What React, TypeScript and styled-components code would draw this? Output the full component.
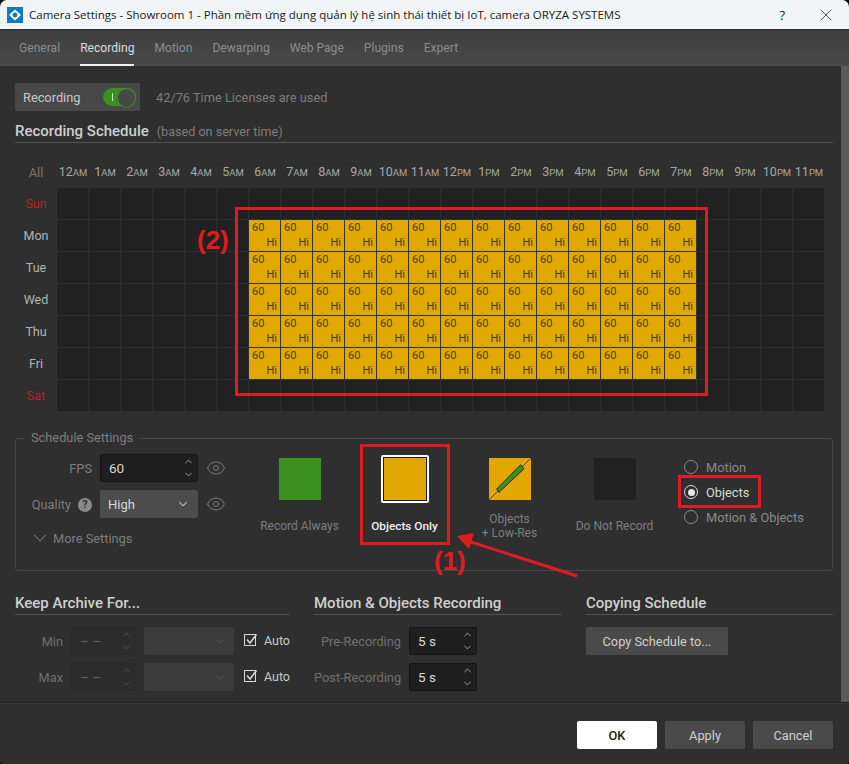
import React from "react";
import styled, { createGlobalStyle } from "styled-components";
import { ChevronDown, ChevronUp, Eye, X } from "lucide-react";

const GlobalStyle = createGlobalStyle`
    html, body {
        margin: 0;
        padding: 0;
        background: #0b0b0b;
    }
    * {
        box-sizing: border-box;
    }
`;

const Window = styled.div`
    position: relative;
    width: 849px;
    height: 764px;
    display: flex;
    flex-direction: column;
    background: #2f2f2f;
    border-radius: 7px 7px 4px 4px;
    overflow: hidden;
    font-family: Roboto, "Liberation Sans", sans-serif;
    font-size: 12.8px;
    color: #cfcfcf;
`;

const TitleBar = styled.div`
    height: 30px;
    flex-shrink: 0;
    display: flex;
    align-items: center;
    padding: 0 13px 0 7px;
    background: #f2f5f8;
    border-bottom: 1px solid #2a2a2a;
    color: #1a1a1a;
`;

const TitleText = styled.span`
    margin-left: 6px;
    flex: 1;
    font-family: "Open Sans", "Noto Sans", sans-serif;
    font-size: 11.5px;
    white-space: nowrap;
`;

const HelpMark = styled.span`
    font-family: "Open Sans", sans-serif;
    font-size: 13px;
    margin-right: 31px;
`;

const TabBar = styled.div`
    height: 36px;
    flex-shrink: 0;
    display: flex;
    gap: 20px;
    padding-left: 19px;
    background: linear-gradient(#3e3e3e, #4a4a4a);
    font-size: 12.1px;
`;

const Tab = styled.div<{ $active?: boolean }>`
    display: flex;
    align-items: center;
    height: 100%;
    padding-top: 2px;
    color: ${props => props.$active ? "#dcdcdc" : "#8c8c8c"};
    border-bottom: 2px solid ${props => props.$active ? "#f0f0f0" : "transparent"};
`;

const Body = styled.div`
    flex: 1;
    min-height: 0;
    display: flex;
`;

const Content = styled.div`
    flex: 1;
    padding: 17px 8px 0 15px;
`;

const ScrollTrack = styled.div`
    width: 8px;
    background: #5a5a5a;
`;

const RecordingRow = styled.div`
    display: flex;
    align-items: center;
    height: 28px;
    gap: 16px;
`;

const RecordingChip = styled.div`
    width: 125px;
    height: 28px;
    display: flex;
    align-items: center;
    justify-content: space-between;
    padding: 0 4px 0 8px;
    background: #484848;
    border-radius: 2px;
    color: #c8c8c8;
`;

const Toggle = styled.div`
    position: relative;
    width: 33px;
    height: 18px;
    border-radius: 9px;
    background: #3a8f1e;

    &::before {
        content: "";
        position: absolute;
        left: 9px;
        top: 5px;
        width: 1px;
        height: 8px;
        background: #cfe8c4;
    }

    &::after {
        content: "";
        position: absolute;
        right: 0;
        top: 0;
        width: 17px;
        height: 18px;
        border-radius: 50%;
        background: #474747;
        border: 1.5px solid #3a8f1e;
    }
`;

const LicenseText = styled.span`
    color: #7d7d7d;
`;

const ScheduleHeading = styled.div`
    margin-top: 7px;
    height: 25px;
    padding-top: 2px;
    display: flex;
    align-items: center;
    gap: 8px;
    border-bottom: 1px solid #525252;
`;

const HeadingTitle = styled.span`
    font-size: 15px;
    font-weight: 500;
    color: #cfcfcf;
`;

const HeadingNote = styled.span`
    font-size: 12.6px;
    color: #7d7d7d;
`;

const ScheduleGrid = styled.div`
    margin-top: 13px;
    display: grid;
    grid-template-columns: 42px repeat(24, 32px);
    grid-auto-rows: 32px;
    width: 810px;
`;

const AllLabel = styled.div`
    display: flex;
    align-items: center;
    justify-content: center;
    color: #777;
`;

const HourLabel = styled.div`
    display: flex;
    align-items: baseline;
    justify-content: center;
    padding-top: 8px;
    color: #a8a8a8;
    font-size: 12.5px;
    white-space: nowrap;
`;

const HourSuffix = styled.span`
    font-size: 9.5px;
`;

const DayLabel = styled.div<{ $weekend?: boolean }>`
    display: flex;
    align-items: center;
    justify-content: center;
    padding-bottom: 2px;
    font-size: 12.5px;
    color: ${props => props.$weekend ? "#b8232a" : "#b4b4b4"};
`;

const Cell = styled.div<{ $filled?: boolean }>`
    display: flex;
    flex-direction: column;
    justify-content: space-between;
    padding: 1px 3px 1px 3px;
    font-size: 11px;
    line-height: 14px;
    color: #4a3c14;
    background: ${props => props.$filled ? "#e0a800" : "#212121"};
    border-right: 1px solid ${props => props.$filled ? "#333" : "#2e2e2e"};
    border-bottom: 1px solid ${props => props.$filled ? "#333" : "#2e2e2e"};
`;

const CellHi = styled.span`
    align-self: flex-end;
`;

const SettingsGroup = styled.fieldset`
    margin: 19px 0 0;
    height: 140px;
    padding: 9px 0 0;
    display: flex;
    border: 1px solid #484848;
    border-radius: 3px;
`;

const SettingsLegend = styled.legend`
    margin-left: 8px;
    padding: 0 7px;
    color: #7d7d7d;
    font-size: 12.8px;
    line-height: 14px;
`;

const FormColumn = styled.div`
    width: 231px;
    display: grid;
    grid-template-columns: 84px 98px 28px;
    grid-auto-rows: 28px;
    row-gap: 8px;
    align-content: start;
    align-items: center;
`;

const FieldLabel = styled.div`
    display: flex;
    align-items: center;
    justify-content: flex-end;
    gap: 3px;
    padding: 1px 8px 0 0;
    color: #7d7d7d;
`;

const HelpBadge = styled.span`
    width: 14px;
    height: 14px;
    margin-left: 4px;
    border-radius: 50%;
    background: #8a8a8a;
    color: #2f2f2f;
    font-size: 11px;
    font-weight: 700;
    line-height: 14px;
    text-align: center;
`;

const EyeSlot = styled.div`
    display: flex;
    justify-content: flex-end;
    color: #7d7d7d;
`;

const SpinBox = styled.div<{ $disabled?: boolean }>`
    height: 28px;
    display: flex;
    align-items: center;
    justify-content: space-between;
    padding: 0 3px 0 8px;
    background: ${props => props.$disabled ? "#2c2c2c" : "#1f1f1f"};
    border: 1px solid ${props => props.$disabled ? "#292929" : "#141414"};
    border-radius: 2px;
    color: ${props => props.$disabled ? "#666" : "#d8d8d8"};
    font-size: 13.5px;
`;

const SpinArrows = styled.div<{ $disabled?: boolean }>`
    display: flex;
    flex-direction: column;
    gap: 2px;
    color: ${props => props.$disabled ? "#5e5e5e" : "#d0d0d0"};
`;

const SelectBox = styled.div<{ $disabled?: boolean }>`
    height: 28px;
    display: flex;
    align-items: center;
    justify-content: space-between;
    padding: 0 8px;
    background: ${props => props.$disabled ? "#3c3c3c" : "#4c4c4c"};
    border-radius: 2px;
    color: #d8d8d8;
    font-size: 13px;

    svg {
        color: ${props => props.$disabled ? "#5e5e5e" : "#d0d0d0"};
    }
`;

const MoreSettings = styled.div`
    grid-column: 1 / -1;
    margin-top: -4px;
    display: flex;
    align-items: center;
    gap: 2px;
    padding-left: 13px;
    color: #7d7d7d;
`;

const ModeColumn = styled.div`
    width: 105px;
    display: flex;
    flex-direction: column;
    align-items: center;
    padding-top: 4px;
`;

const Swatch = styled.div<{ $color: string; $selected?: boolean }>`
    position: relative;
    width: ${props => props.$selected ? "48px" : "42px"};
    height: ${props => props.$selected ? "48px" : "42px"};
    margin: ${props => props.$selected ? "-3px 0" : "0"};
    background: ${props => props.$color};
    border: ${props => props.$selected ? "2px solid #fff" : "none"};
    outline: ${props => props.$selected ? "1px solid #1a1a1a" : "none"};
    outline-offset: -3px;
    border-radius: ${props => props.$selected ? "2px" : "0"};
    overflow: hidden;
`;

const ModeLabel = styled.div<{ $selected?: boolean }>`
    height: 48px;
    display: flex;
    align-items: center;
    padding-top: 4px;
    text-align: center;
    font-size: ${props => props.$selected ? "11.8px" : "12px"};
    line-height: 14px;
    font-weight: ${props => props.$selected ? 500 : 400};
    color: ${props => props.$selected ? "#f0f0f0" : "#7d7d7d"};
`;

const RadioColumn = styled.div`
    margin-left: 17px;
    display: flex;
    flex-direction: column;
    gap: 11px;
    padding-top: 6px;
`;

const RadioRow = styled.div<{ $checked?: boolean }>`
    height: 14px;
    display: flex;
    align-items: center;
    gap: 8px;
    color: ${props => props.$checked ? "#d8d8d8" : "#8a8a8a"};
`;

const RadioDot = styled.span<{ $checked?: boolean }>`
    width: 14px;
    height: 14px;
    display: flex;
    align-items: center;
    justify-content: center;
    border-radius: 50%;
    border: 1px solid ${props => props.$checked ? "#e0e0e0" : "#8a8a8a"};

    &::after {
        content: "";
        display: ${props => props.$checked ? "block" : "none"};
        width: 7px;
        height: 7px;
        border-radius: 50%;
        background: #e8e8e8;
    }
`;

const BottomColumns = styled.div`
    margin-top: 21px;
    display: grid;
    grid-template-columns: 275px 248px 247px;
    column-gap: 24px;
`;

const BottomHeading = styled.div`
    height: 23px;
    padding-bottom: 1px;
    display: flex;
    align-items: center;
    font-size: 15px;
    font-weight: 500;
    color: #cfcfcf;
    border-bottom: 1px solid #525252;
`;

const FieldRows = styled.div`
    margin-top: 12px;
    display: flex;
    flex-direction: column;
    gap: 8px;
`;

const FieldRow = styled.div`
    display: flex;
    align-items: center;
    height: 28px;
`;

const RowLabel = styled.div<{ $width: number }>`
    width: ${props => props.$width}px;
    padding-right: 8px;
    text-align: right;
    color: #6f6f6f;
    white-space: nowrap;
`;

const SpinSlot = styled.div<{ $width: number }>`
    width: ${props => props.$width}px;
`;

const UnitSlot = styled.div`
    width: 90px;
    margin-left: 8px;
`;

const AutoCheck = styled.div`
    display: flex;
    align-items: center;
    gap: 6px;
    margin: 0 0 2px 10px;
    font-size: 12.5px;
    color: #c8c8c8;
`;

const SecondaryButton = styled.button<{ $width: number; $primary?: boolean }>`
    width: ${props => props.$width}px;
    height: 28px;
    padding: 0;
    border: none;
    border-radius: 2px;
    background: ${props => props.$primary ? "#fff" : "#4a4a4a"};
    color: ${props => props.$primary ? "#1a1a1a" : "#cfcfcf"};
    font-family: inherit;
    font-size: 12.8px;
    font-weight: ${props => props.$primary ? 500 : 400};
`;

const CopyButton = styled(SecondaryButton)`
    margin-top: 12px;
`;

const Footer = styled.div`
    height: 62px;
    flex-shrink: 0;
    display: flex;
    justify-content: flex-end;
    gap: 8px;
    padding: 18px 16px 0 0;
    background: #2f2f2f;
    border-top: 1px solid #1f1f1f;
    box-shadow: inset 0 1px 0 #3a3a3a;
`;

// red marks someone drew on top of the screenshot
const Callout = styled.div<{ $x: number; $y: number; $w: number; $h: number }>`
    position: absolute;
    left: ${props => props.$x}px;
    top: ${props => props.$y}px;
    width: ${props => props.$w}px;
    height: ${props => props.$h}px;
    border: 3px solid #e01b22;
    pointer-events: none;
`;

const CalloutNumber = styled.div<{ $x: number; $y: number }>`
    position: absolute;
    left: ${props => props.$x}px;
    top: ${props => props.$y}px;
    font-family: "Liberation Sans", Arial, sans-serif;
    font-size: 26px;
    font-weight: 700;
    line-height: 28px;
    color: #e01b22;
`;

const ArrowOverlay = styled.svg`
    position: absolute;
    left: 450px;
    top: 530px;
    pointer-events: none;
`;

const hours = [
    ...["12", "1", "2", "3", "4", "5", "6", "7", "8", "9", "10", "11"].map(h => [h, "AM"]),
    ...["12", "1", "2", "3", "4", "5", "6", "7", "8", "9", "10", "11"].map(h => [h, "PM"]),
];

const days = ["Sun", "Mon", "Tue", "Wed", "Thu", "Fri", "Sat"];

const Spinner: React.FC<{ value: string; disabled?: boolean }> = ({ value, disabled }) => (
    <SpinBox $disabled={disabled}>
        <span>{value}</span>
        <SpinArrows $disabled={disabled}>
            <ChevronUp size={11} strokeWidth={1.5} />
            <ChevronDown size={11} strokeWidth={1.5} />
        </SpinArrows>
    </SpinBox>
);

const AppLogo = () => (
    <svg width="16" height="16" viewBox="0 0 16 16">
        <rect width="16" height="16" fill="#1479c4" />
        <path d="M8 2.5 14 8 8 13.5 2 8Z" fill="#fff" />
        <circle cx="8" cy="8" r="2.4" fill="#1479c4" />
    </svg>
);

const CheckMark = () => (
    <svg width="14" height="14" viewBox="0 0 14 14" fill="none">
        <rect x="0.5" y="1.5" width="11" height="11" stroke="#d8d8d8" />
        <path d="M3 6.5 6 10 12.5 1.5" stroke="#d8d8d8" strokeWidth="1.6" />
    </svg>
);

const LowResMark = () => (
    <svg width="42" height="42" viewBox="0 0 42 42">
        <path d="M0 42 42 0" stroke="#5c4a10" strokeWidth="1" />
        <path d="M7.7 31 31.7 6.7 35 10.7 10 34.3Z" fill="#3c9120" stroke="#222" strokeWidth="1" />
    </svg>
);

const isFilled = (day: number, hour: number) => day >= 1 && day <= 5 && hour >= 6 && hour <= 19;

export default function App() {
    return (
        <Window>
            <GlobalStyle />
            <TitleBar>
                <AppLogo />
                <TitleText>Camera Settings - Showroom 1 - Phần mềm ứng dụng quản lý hệ sinh thái thiết bị IoT, camera ORYZA SYSTEMS</TitleText>
                <HelpMark>?</HelpMark>
                <X size={20} strokeWidth={0.9} />
            </TitleBar>
            <TabBar>
                <Tab>General</Tab>
                <Tab $active>Recording</Tab>
                <Tab>Motion</Tab>
                <Tab>Dewarping</Tab>
                <Tab>Web Page</Tab>
                <Tab>Plugins</Tab>
                <Tab>Expert</Tab>
            </TabBar>
            <Body>
                <Content>
                    <RecordingRow>
                        <RecordingChip>
                            Recording
                            <Toggle />
                        </RecordingChip>
                        <LicenseText>42/76 Time Licenses are used</LicenseText>
                    </RecordingRow>
                    <ScheduleHeading>
                        <HeadingTitle>Recording Schedule</HeadingTitle>
                        <HeadingNote>(based on server time)</HeadingNote>
                    </ScheduleHeading>
                    <ScheduleGrid>
                        <AllLabel>All</AllLabel>
                        {hours.map(([hour, suffix], i) => (
                            <HourLabel key={i}>
                                {hour}
                                <HourSuffix>{suffix}</HourSuffix>
                            </HourLabel>
                        ))}
                        {days.map((day, d) => (
                            <React.Fragment key={day}>
                                <DayLabel $weekend={d === 0 || d === 6}>{day}</DayLabel>
                                {hours.map((_, h) => (
                                    <Cell key={h} $filled={isFilled(d, h)}>
                                        {isFilled(d, h) && (
                                            <>
                                                <span>60</span>
                                                <CellHi>Hi</CellHi>
                                            </>
                                        )}
                                    </Cell>
                                ))}
                            </React.Fragment>
                        ))}
                    </ScheduleGrid>
                    <SettingsGroup>
                        <SettingsLegend>Schedule Settings</SettingsLegend>
                        <FormColumn>
                            <FieldLabel>FPS</FieldLabel>
                            <Spinner value="60" />
                            <EyeSlot><Eye size={20} strokeWidth={1.15} /></EyeSlot>
                            <FieldLabel>
                                Quality
                                <HelpBadge>?</HelpBadge>
                            </FieldLabel>
                            <SelectBox>
                                High
                                <ChevronDown size={14} strokeWidth={1.75} />
                            </SelectBox>
                            <EyeSlot><Eye size={20} strokeWidth={1.15} /></EyeSlot>
                            <MoreSettings>
                                <ChevronDown size={22} strokeWidth={1.1} />
                                More Settings
                            </MoreSettings>
                        </FormColumn>
                        <ModeColumn>
                            <Swatch $color="#3c9120" />
                            <ModeLabel>Record Always</ModeLabel>
                        </ModeColumn>
                        <ModeColumn>
                            <Swatch $color="#e0a800" $selected />
                            <ModeLabel $selected>Objects Only</ModeLabel>
                        </ModeColumn>
                        <ModeColumn>
                            <Swatch $color="#e0a800"><LowResMark /></Swatch>
                            <ModeLabel>Objects<br />+ Low-Res</ModeLabel>
                        </ModeColumn>
                        <ModeColumn>
                            <Swatch $color="#212121" />
                            <ModeLabel>Do Not Record</ModeLabel>
                        </ModeColumn>
                        <RadioColumn>
                            <RadioRow><RadioDot />Motion</RadioRow>
                            <RadioRow $checked><RadioDot $checked />Objects</RadioRow>
                            <RadioRow><RadioDot />Motion &amp; Objects</RadioRow>
                        </RadioColumn>
                    </SettingsGroup>
                    <BottomColumns>
                        <div>
                            <BottomHeading>Keep Archive For...</BottomHeading>
                            <FieldRows>
                                {["Min", "Max"].map(label => (
                                    <FieldRow key={label}>
                                        <RowLabel $width={56}>{label}</RowLabel>
                                        <SpinSlot $width={65}><Spinner value="– –" disabled /></SpinSlot>
                                        <UnitSlot>
                                            <SelectBox $disabled>
                                                <span />
                                                <ChevronDown size={13} strokeWidth={1.5} />
                                            </SelectBox>
                                        </UnitSlot>
                                        <AutoCheck><CheckMark />Auto</AutoCheck>
                                    </FieldRow>
                                ))}
                            </FieldRows>
                        </div>
                        <div>
                            <BottomHeading>Motion &amp; Objects Recording</BottomHeading>
                            <FieldRows>
                                {["Pre-Recording", "Post-Recording"].map(label => (
                                    <FieldRow key={label}>
                                        <RowLabel $width={95}>{label}</RowLabel>
                                        <SpinSlot $width={68}><Spinner value="5 s" /></SpinSlot>
                                    </FieldRow>
                                ))}
                            </FieldRows>
                        </div>
                        <div>
                            <BottomHeading>Copying Schedule</BottomHeading>
                            <CopyButton $width={142}>Copy Schedule to...</CopyButton>
                        </div>
                    </BottomColumns>
                </Content>
                <ScrollTrack />
            </Body>
            <Footer>
                <SecondaryButton $width={80} $primary>OK</SecondaryButton>
                <SecondaryButton $width={80}>Apply</SecondaryButton>
                <SecondaryButton $width={80}>Cancel</SecondaryButton>
            </Footer>
            <Callout $x={235} $y={207} $w={473} $h={189} />
            <Callout $x={360} $y={444} $w={90} $h={101} />
            <Callout $x={678} $y={475} $w={83} $h={33} />
            <CalloutNumber $x={197} $y={226}>(2)</CalloutNumber>
            <CalloutNumber $x={434} $y={547}>(1)</CalloutNumber>
            <ArrowOverlay width="135" height="55" viewBox="0 0 135 55">
                <path d="M127 46 18 11" stroke="#e01b22" strokeWidth="3" />
                <path d="M7 6 24 3 19 19Z" fill="#e01b22" />
            </ArrowOverlay>
        </Window>
    );
}
